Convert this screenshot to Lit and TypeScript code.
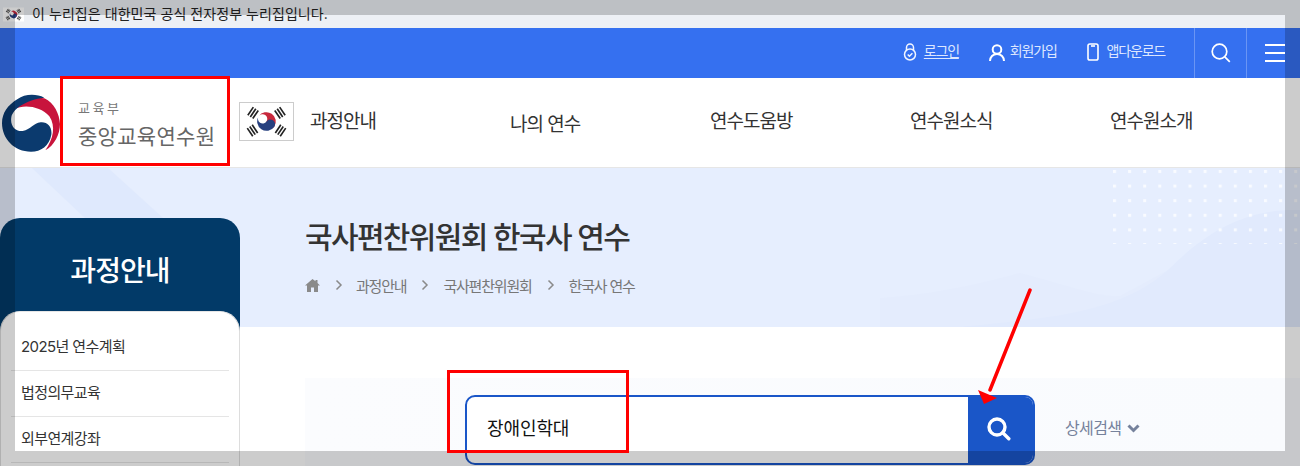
import { LitElement, html, css, svg } from "lit";
import { customElement } from "lit/decorators.js";

const flag = (w: number, h: number) => {
  const bars = (x: number, y: number, a: number, n: number[]) => svg`<g transform="translate(${x} ${y}) rotate(${a})" fill="#222">${n.map(
    (o) => svg`<rect x="-5" y=${o} width="10" height="1.7"/>`
  )}</g>`;
  return html`<svg width=${w} height=${h} viewBox="0 0 54 36">
    <rect width="54" height="36" fill="#fff"/>
    <g transform="rotate(33.7 27 18)">
      <path d="M17.500 18a9.500 9.500 0 0 1 19 0a4.750 4.750 0 0 1-9.500 0a4.750 4.750 0 0 0-9.500 0z" fill="#c8283c"/>
      <path d="M17.500 18a9.500 9.500 0 0 0 19 0a4.750 4.750 0 0 0-9.500 0a4.750 4.750 0 0 1-9.500 0z" fill="#27407f"/>
    </g>
    ${bars(13, 9, -56, [-3.500, -0.500, 2.500])}${bars(41, 9, 56, [-3.500, -0.500, 2.500])}${bars(13, 27, 56, [-3.500, -0.500, 2.500])}${bars(41, 27, -56, [-3.500, -0.500, 2.500])}
  </svg>`;
};

const chevron = html`<svg width="8" height="12" viewBox="0 0 8 12" fill="none" stroke="#8a8a8a" stroke-width="1.500"><path d="M1.500 1.500L6 6l-4.500 4.500"/></svg>`;

@customElement("app-root")
export class AppRoot extends LitElement {
  static styles = css`
    :host { display: block; position: relative; width: 1300px; height: 466px; overflow: hidden; background: #fff;
      font-family: Inter, "Noto Sans CJK KR", "Noto Sans", sans-serif; color: #333; }
    a { color: inherit; text-decoration: none; }
    svg { display: block; flex: none; }
    .gov { height: 28px; background: #edf0f5; display: flex; align-items: center; padding-left: 3px; gap: 8px;
      font-size: 14px; color: #222; letter-spacing: 0.06px; }
    .gov span { position: relative; top: -1px; }
    .top { height: 50px; background: #3570f0; display: flex; justify-content: flex-end; align-items: stretch; color: #dde7ff; }
    .tl { display: flex; align-items: center; font-size: 14px; letter-spacing: -1.2px; gap: 7px; margin-right: 30px; padding-bottom: 2px; box-sizing: border-box; }
    .tl span { padding-bottom: 4px; }
    .tl u { text-underline-offset: 2px; }
    .tl.user { gap: 5px; }
    .tl.app { gap: 8px; margin-right: 29px; }
    .tb { width: 52px; box-sizing: border-box; border-left: 1px solid #6a95f4; display: flex; align-items: center; justify-content: center; }
    .tb.menu { width: 54px; justify-content: flex-start; padding-left: 18px; }
    .head { height: 89px; border-bottom: 1px solid #e6e6e6; display: flex; align-items: center; overflow: hidden; }
    .emblem { margin-left: 2px; }
    .org { width: 161px; margin-left: 18px; color: #666; flex: none; }
    .org .s { font-size: 13px; letter-spacing: 2.6px; line-height: 18px; color: #777; margin-top: 4px; }
    .org .b { font-size: 21px; line-height: 28px; margin-top: 6px; letter-spacing: 0.3px; white-space: nowrap; }
    .flag { width: 53px; height: 37px; border: 1px solid #ccc; flex: none; margin-right: 16px; display: flex; margin-top: -3px; }
    .nav { display: flex; font-size: 19px; letter-spacing: -1px; color: #333; }
    .nav a { width: 200px; flex: none; line-height: 26px; margin-top: 1px; }
    .nav a.low { margin-top: 4px; }
    .hero { height: 159px; background: #e6eefe; position: relative; padding-left: 305px; overflow: hidden; }
    .deco { position: absolute; inset: 0; }
    .hin { position: relative; padding-top: 50px; }
    h1 { margin: 0; font-size: 30px; font-weight: 500; line-height: 38px; letter-spacing: -1.65px; color: #333; }
    .crumb { display: flex; align-items: center; margin-top: 19px; font-size: 15px; letter-spacing: -1.2px; color: #777; height: 20px; }
    .crumb .c { display: flex; margin: 0 14px 0 15px; }
    .crumb .c.first { margin: 0 13px 0 15px; }
    .body { display: flex; }
    .side { width: 240px; margin-top: -109px; position: relative; background: #023a68; border-radius: 20px 20px 0 0; flex: none; }
    .side h2 { margin: 0; height: 93px; display: flex; align-items: center; justify-content: center; font-size: 28px;
      font-weight: 500; color: #fff; letter-spacing: -0.9px; padding-top: 11px; padding-bottom: 2px; box-sizing: border-box; }
    .list { background: #fff; border-radius: 20px 20px 0 0; border-right: 1px solid #ddd; border-left: 1px solid #ddd;
      border-top: 1px solid #e6e6e6; padding: 12px 10px 0; box-sizing: border-box; height: 200px; }
    .list a { display: flex; align-items: center; height: 46px; padding: 0 0 5px 10px; font-size: 15px; letter-spacing: -0.6px;
      border-bottom: 1px solid #e5e5e5; box-sizing: border-box; color: #333; }
    .list a:first-child { height: 47px; padding-bottom: 3px; }
    .main { flex: 1; padding: 51px 0 0 65px; }
    .panel { background: linear-gradient(90deg, #fbfcfe, #f9fbfe); height: 100px; display: flex; align-items: flex-start; padding: 17px 0 0 160px; }
    .sbox { width: 570px; height: 70px; border: 2px solid #1a56c8; border-radius: 10px; box-sizing: border-box; background: #fff;
      display: flex; overflow: hidden; flex: none; }
    .sin { flex: 1; padding: 15px 0 0 20px; font-size: 18px; line-height: 34px; color: #111; letter-spacing: -0.1px; }
    .sbtn { width: 65px; background: #1a56c8; display: flex; justify-content: center; padding: 20px 3px 0 0; box-sizing: border-box; }
    .more { margin: 21px 0 0 30px; display: flex; align-items: center; gap: 6px; font-size: 16px; color: #76829c; letter-spacing: -0.65px; line-height: 24px; }
    .scrim { position: absolute; left: 15px; top: 15px; width: 1270px; height: 436px; box-shadow: 0 0 0 1000px rgba(0, 0, 0, 0.2); pointer-events: none; }
    .box { position: absolute; border: 3px solid #f00; box-sizing: border-box; pointer-events: none; }
    .b1 { left: 60px; top: 76px; width: 170px; height: 90px; }
    .b2 { left: 447px; top: 370px; width: 182px; height: 83px; }
    .arrow { position: absolute; left: 0; top: 0; pointer-events: none; }
  `;

  render() {
    return html`
      <div class="gov">${flag(21, 15)}<span>이 누리집은 대한민국 공식 전자정부 누리집입니다.</span></div>
      <div class="top">
        <a class="tl"><svg width="14" height="18" viewBox="0 0 14 18" fill="none" stroke="#f2f6ff" stroke-width="1.500"><path d="M3.500 7V4.500a3.500 3.500 0 0 1 7 0V7"/><circle cx="7" cy="11.500" r="5.500"/><path d="M4.700 11.500l1.700 1.700 3-3"/></svg><span><u>로그인</u></span></a>
        <a class="tl user"><svg width="16" height="17" viewBox="0 0 16 17" fill="none" stroke="#fff" stroke-width="2"><circle cx="8" cy="5.500" r="4.300"/><path d="M1 17c0-4 3-7 7-7s7 3 7 7"/></svg><span>회원가입</span></a>
        <a class="tl app"><svg width="12" height="18" viewBox="0 0 12 18" fill="none" stroke="#fff" stroke-width="1.600"><rect x="1" y="1" width="10" height="16" rx="1.800"/><path d="M4 3h4"/></svg><span>앱다운로드</span></a>
        <a class="tb"><svg width="20" height="20" viewBox="0 0 20 20" fill="none" stroke="#fff" stroke-width="1.700"><circle cx="8.500" cy="8.500" r="7.300"/><path d="M13.800 13.800l5 5"/></svg></a>
        <a class="tb menu"><svg width="20" height="18" viewBox="0 0 20 18" fill="#fff"><rect y="0" width="20" height="2"/><rect y="8" width="20" height="2"/><rect y="16" width="20" height="2"/></svg></a>
      </div>
      <div class="head">
        <svg class="emblem" width="58" height="58" viewBox="8 15 174 174">
          <path d="M45 60C70 30 110 22 135 28C165 42 180 75 182 105C182 135 165 170 138 184C162 150 170 112 150 82C125 52 75 45 45 60Z" fill="#c8143c"/>
          <path d="M135 26C110 13 75 15 55 30C25 48 8 72 8 102C8 150 45 188 95 188C125 188 150 170 156 137C159 114 145 98 124 100C102 102 95 122 70 126C46 128 32 108 36 85C40 60 80 32 135 26Z" fill="#0b3a6e"/>
        </svg>
        <div class="org"><div class="s">교육부</div><div class="b">중앙교육연수원</div></div>
        <div class="flag">${flag(53, 37)}</div>
        <nav class="nav"><a>과정안내</a><a class="low">나의 연수</a><a>연수도움방</a><a>연수원소식</a><a>연수원소개</a></nav>
      </div>
      <div class="hero">
        <svg class="deco" width="1300" height="159" viewBox="0 0 1300 159">
          <defs><pattern id="d" x="1113" y="2" width="15.100" height="14.600" patternUnits="userSpaceOnUse"><rect width="3" height="3" fill="#fff" opacity=".75"/></pattern></defs>
          <path d="M32 0H108L163 50H85z" fill="#dfe9fd"/>
          <path d="M880 130C950 125 1000 110 1020 105C1060 115 1100 130 1120 128L1168 102V159H880z" fill="#e4ecfd"/>
          <path d="M1168 102C1200 70 1240 40 1300 42V159H960C1050 150 1120 145 1168 102z" fill="#e1eafd"/>
          <rect x="1113" y="2" width="187" height="74" fill="url(#d)"/>
        </svg>
        <div class="hin">
          <h1>국사편찬위원회 한국사 연수</h1>
          <div class="crumb">
            <svg width="15" height="13" viewBox="0 0 15 13" fill="#8a8a8a"><path d="M7.500 0L0 6.500h2V13h4V8.500h3V13h4V6.500h2L12.500 4V1h-2v1.300z"/></svg>
            <span class="c first">${chevron}</span>
            <span>과정안내</span>
            <span class="c">${chevron}</span>
            <span>국사편찬위원회</span>
            <span class="c">${chevron}</span>
            <span>한국사 연수</span>
          </div>
        </div>
      </div>
      <div class="body">
        <aside class="side">
          <h2>과정안내</h2>
          <div class="list"><a>2025년 연수계획</a><a>법정의무교육</a><a>외부연계강좌</a></div>
        </aside>
        <div class="main">
          <div class="panel">
            <div class="sbox">
              <div class="sin">장애인학대</div>
              <div class="sbtn"><svg width="24" height="24" viewBox="0 0 24 24" fill="none" stroke="#fff"><circle cx="10" cy="10" r="8" stroke-width="3.400"/><path d="M15.800 15.800l6 6" stroke-width="3.400" stroke-linecap="round"/></svg></div>
            </div>
            <div class="more">상세검색<svg width="13" height="9" viewBox="0 0 13 9" fill="none" stroke="#76829c" stroke-width="3"><path d="M1.500 1.500l5 5 5-5"/></svg></div>
          </div>
        </div>
      </div>
      <div class="scrim"></div>
      <div class="box b1"></div>
      <div class="box b2"></div>
      <svg class="arrow" width="1300" height="466" viewBox="0 0 1300 466">
        <path d="M1030 290L990 390" stroke="#f00" stroke-width="3.500" stroke-linecap="round"/>
        <path d="M978 390L984 404 997 398z" fill="#f00"/>
      </svg>
    `;
  }
}
